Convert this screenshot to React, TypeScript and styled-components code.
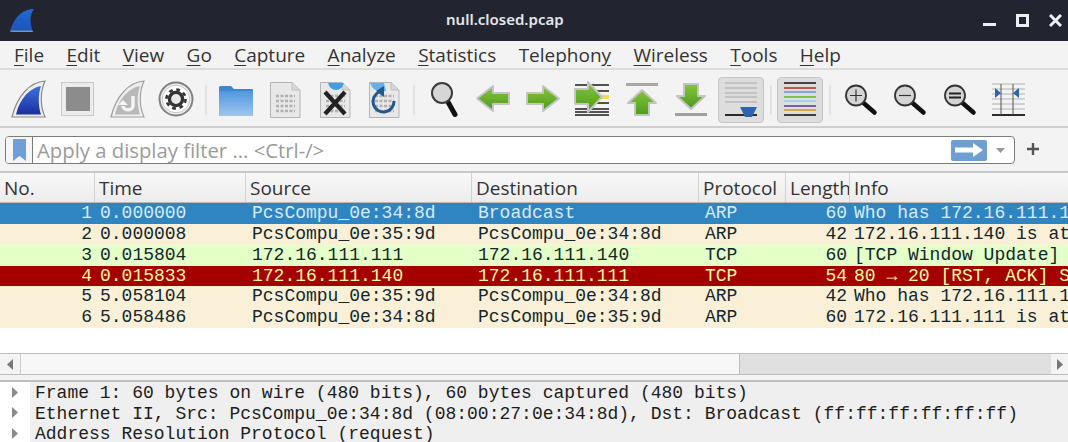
import React from "react";
import styled, { createGlobalStyle } from "styled-components";

const GlobalStyle = createGlobalStyle`
  html, body {
    margin: 0;
    padding: 0;
    background: #f3f3f3;
    overflow: hidden;
  }
`;

const Window = styled.div`
  width: 1068px;
  height: 442px;
  overflow: hidden;
  display: flex;
  flex-direction: column;
  font-family: "Open Sans", "Noto Sans", sans-serif;
  color: #2b2b2b;
`;

const TitleBar = styled.header`
  height: 41px;
  flex: none;
  background: #22252f;
  display: grid;
  grid-template-columns: 446px auto 1fr;
  align-items: center;
`;

const Logo = styled.div`
  padding-left: 10px;
  display: flex;
  svg {
    display: block;
  }
`;

const WindowTitle = styled.div`
  font-family: "Noto Sans", sans-serif;
  font-size: 15px;
  font-weight: 600;
  color: #e4e6ea;
  padding-bottom: 3px;
`;

const WindowButtons = styled.div`
  justify-self: end;
  display: flex;
  gap: 20px;
  padding-right: 6px;
  align-items: center;
`;

const MenuBar = styled.nav`
  height: 27px;
  flex: none;
  background: #f3f3f3;
  border-bottom: 2px solid #dcdcdc;
  display: flex;
  gap: 22.4px;
  padding-left: 14px;
  align-items: center;
  font-size: 19px;
  color: #333;
  box-sizing: content-box;
`;

const Mnemonic = styled.span`
  text-decoration: underline;
  text-underline-offset: 3px;
  text-decoration-thickness: 1px;
`;

const ToolBar = styled.div`
  height: 52px;
  padding: 4px 0 0 3px;
  flex: none;
  background: #f3f3f3;
  border-bottom: 2px solid #cfcfcf;
  display: flex;
  align-items: center;
`;

const ToolSlot = styled.div`
  width: 49.5px;
  height: 46px;
  flex: none;
  display: flex;
  align-items: center;
  justify-content: center;
`;

const ToolSvg = styled.svg`
  display: block;
  margin-bottom: 2px;
`;

const ToggleFace = styled.div`
  width: 46px;
  height: 46px;
  box-sizing: border-box;
  background: #dddddd;
  border: 1px solid #c6c6c6;
  border-radius: 4px;
  display: flex;
  align-items: center;
  justify-content: center;
`;

const ToolSeparator = styled.div`
  width: 10px;
  flex: none;
  display: flex;
  justify-content: center;
  &::before {
    content: "";
    width: 2px;
    height: 30px;
    background: #e2e2e2;
  }
`;

const FilterBar = styled.div`
  height: 42px;
  padding-top: 1px;
  flex: none;
  background: #f3f3f3;
  border-bottom: 2px solid #c8c8c8;
  display: flex;
  align-items: center;
  padding-left: 5px;
  gap: 10px;
`;

const FilterInput = styled.div`
  width: 1010px;
  height: 28px;
  box-sizing: border-box;
  background: #fff;
  border: 1px solid #7c7c7c;
  border-radius: 4px;
  display: flex;
  align-items: center;
`;

const BookmarkButton = styled.div`
  width: 27px;
  height: 100%;
  flex: none;
  box-sizing: border-box;
  border-right: 1px solid #7c7c7c;
  display: flex;
  align-items: center;
  justify-content: center;
  background: #f5f5f5;
  border-radius: 3px 0 0 3px;
`;

const FilterPlaceholder = styled.div`
  flex: 1;
  padding-left: 4px;
  font-size: 20.3px;
  line-height: 28px;
  color: #9b9b9b;
  white-space: nowrap;
`;

const ApplyButton = styled.div`
  width: 36px;
  height: 21px;
  flex: none;
  background: #6f9fd0;
  border-radius: 2px;
  display: flex;
  align-items: center;
  justify-content: center;
`;

const DropButton = styled.div`
  width: 27px;
  flex: none;
  display: flex;
  justify-content: center;
`;

const PlusButton = styled.div`
  width: 16px;
  display: flex;
  justify-content: center;
  margin-bottom: 3px;
`;

const columns = "95px 151px 226px 227px 87px 64px 1fr";

const PacketHeader = styled.div`
  height: 29px;
  flex: none;
  display: grid;
  grid-template-columns: ${columns};
  background: linear-gradient(#f8f8f8, #ececec);
  border-bottom: 1px solid #b8b8b8;
  font-size: 19px;
  color: #333;
`;

const HeaderCell = styled.div`
  padding-left: 4px;
  line-height: 31px;
  white-space: nowrap;
  overflow: hidden;
  border-right: 1px solid #d2d2d2;
  &:last-child {
    border-right: 0;
  }
`;

const PacketList = styled.div`
  height: 150px;
  flex: none;
  background: #fff;
  font-family: "Liberation Mono", monospace;
  font-size: 18px;
`;

const rowColors = {
  selected: { bg: "#2f85c1", fg: "#d6ecff" },
  arp: { bg: "#faf0d7", fg: "#12272e" },
  tcp: { bg: "#e4ffc7", fg: "#12272e" },
  bad: { bg: "#a40000", fg: "#fffc9c" },
};

const PacketRow = styled.div<{ $kind: keyof typeof rowColors }>`
  height: 20.85px;
  display: grid;
  grid-template-columns: ${columns};
  line-height: 20.85px;
  background: ${(p) => rowColors[p.$kind].bg};
  color: ${(p) => rowColors[p.$kind].fg};
`;

const Cell = styled.div<{ $right?: boolean; $pad?: number }>`
  padding: 0 ${(p) => (p.$right ? "3px" : "0")} 0 ${(p) => (p.$right ? 0 : (p.$pad ?? 6))}px;
  text-align: ${(p) => (p.$right ? "right" : "left")};
  white-space: pre;
  overflow: hidden;
`;

const ScrollBar = styled.div`
  height: 22px;
  flex: none;
  box-sizing: border-box;
  display: flex;
  border-top: 1px solid #bdbdbd;
  border-bottom: 1px solid #bdbdbd;
  background: #e0e0e0;
`;

const ScrollEnd = styled.div<{ $width: number }>`
  width: ${(p) => p.$width}px;
  flex: none;
  background: #f4f4f4;
  display: flex;
  align-items: center;
  justify-content: center;
`;

const ScrollThumb = styled.div`
  width: 720px;
  flex: none;
  box-sizing: border-box;
  background: #f7f7f7;
  border-left: 1px solid #cdcdcd;
  border-right: 1px solid #bdbdbd;
`;

const ScrollTrack = styled.div`
  flex: 1;
`;

const PaneSplitter = styled.div`
  height: 7px;
  flex: none;
  background: #f3f3f3;
  border-bottom: 2px solid #bdbdbd;
  box-sizing: border-box;
`;

const DetailPane = styled.div`
  flex: 1;
  background: #fff;
  font-family: "Liberation Mono", monospace;
  font-size: 18px;
  line-height: 20.6px;
  color: #1d1d1d;
`;

const DetailRow = styled.div`
  display: flex;
  height: 20.6px;
`;

const DetailArrow = styled.div`
  width: 29px;
  padding-right: 1px;
  flex: none;
  display: flex;
  align-items: center;
  justify-content: center;
  background: #fff;
`;

const DetailText = styled.div`
  flex: 1;
  background: #efefef;
  padding: 1px 0 0 5px;
  white-space: pre;
  overflow: hidden;
`;

const FinPath = "M37 5C22 6 9 20 4 41L37 41C32 30 32 16 37 5Z";

function Gradients() {
  return (
    <svg width="0" height="0" style={{ position: "absolute" }}>
      <defs>
        <linearGradient id="fin" x1="0" y1="0" x2="0" y2="1">
          <stop offset="0" stopColor="#3a72e0" />
          <stop offset="1" stopColor="#1b2f9c" />
        </linearGradient>
        <linearGradient id="finLogo" x1="0" y1="0" x2="0" y2="1">
          <stop offset="0" stopColor="#1f6ad0" />
          <stop offset="0.9" stopColor="#1d54b8" />
          <stop offset="1" stopColor="#8fa8c8" />
        </linearGradient>
        <linearGradient id="folder" x1="0" y1="0" x2="0" y2="1">
          <stop offset="0" stopColor="#4f97de" />
          <stop offset="1" stopColor="#a0c6ee" />
        </linearGradient>
        <linearGradient id="green" x1="0" y1="0" x2="0" y2="1">
          <stop offset="0" stopColor="#86c63a" />
          <stop offset="1" stopColor="#4c9a1e" />
        </linearGradient>
      </defs>
    </svg>
  );
}

function ToolIcon({ children }: { children: React.ReactNode }) {
  return (
    <ToolSvg width="40" height="46" viewBox="0 0 40 46">
      {children}
    </ToolSvg>
  );
}

const DocSheet = ({ x = 5 }: { x?: number }) => (
  <>
    <path
      d={`M${x + 0.5} 6.5H${x + 22}L${x + 30} 14V41.5H${x + 0.5}Z`}
      fill="#e8e8e8"
      stroke="#b5b5b5"
    />
    <path d={`M${x + 22} 6.5V14H${x + 30}`} fill="#d6d6d6" stroke="#c0c0c0" />
    {[20, 25, 30, 35].map((y) => (
      <path
        key={y}
        d={`M${x + 6} ${y}H${x + 25}`}
        stroke="#b0b0b0"
        strokeWidth="2.5"
        strokeDasharray="3 1.5"
      />
    ))}
  </>
);

const Lens = () => (
  <>
    <path d="M23 26.5L34.5 36.5" stroke="#111" strokeWidth="4.5" strokeLinecap="round" />
    <circle cx="16" cy="19.5" r="10" fill="#d4d4d4" stroke="#333" strokeWidth="1.8" />
  </>
);

const ArrowLine = { fill: "url(#green)", stroke: "#c4c4c4", strokeWidth: 2, strokeLinejoin: "round" as const };

const toolIcons: Record<string, React.ReactNode> = {
  shark: (
    <>
      <path d={FinPath} fill="#eee" stroke="#8a8a8a" strokeWidth="1.2" />
      <path d="M33 10C22 12 12 22 8 38.5H33C30 30 30 18 33 10Z" fill="url(#fin)" />
    </>
  ),
  stop: (
    <>
      <rect x="4.5" y="6.5" width="32" height="33" fill="#ececec" stroke="#c9c9c9" />
      <rect x="9" y="11" width="24" height="24" fill="#8c8c8c" />
    </>
  ),
  restart: (
    <>
      <path d={FinPath} fill="#eee" stroke="#a0a0a0" strokeWidth="1.2" />
      <path d="M33 10C22 12 12 22 8 38.5H33C30 30 30 18 33 10Z" fill="#b8b8b8" />
      <path d="M26 20V30C26 35 16 35 16 30" fill="none" stroke="#f4f4f4" strokeWidth="3.5" />
      <path d="M11 29H21L16 24Z" fill="#f4f4f4" />
    </>
  ),
  gear: (
    <>
      <circle cx="20" cy="23" r="16.5" fill="#f2f2f2" stroke="#808080" strokeWidth="2" />
      <circle cx="20" cy="23" r="13.8" fill="#fff" stroke="#c4c4c4" strokeWidth="1" />
      <circle cx="20" cy="23" r="9.5" fill="none" stroke="#333" strokeWidth="2.6" strokeDasharray="3.8 3.66" />
      <circle cx="20" cy="23" r="6.6" fill="#e8e8e8" stroke="#333" strokeWidth="3.4" />
    </>
  ),
  folder: (
    <>
      <path d="M3 39V11.5Q3 10 4.5 10H15L18 13H36Q37 13 37 14V39Q37 40 36 40H4Q3 40 3 39Z" fill="#3f86d0" />
      <rect x="3" y="15" width="34" height="25" rx="1" fill="url(#folder)" />
    </>
  ),
  doc: <DocSheet />,
  close: (
    <>
      <DocSheet />
      <path d="M13 7H29Q27 14 21 14Q15 14 13 7Z" fill="#3ea0e0" />
      <path d="M10 16L30 38M30 16L10 38" stroke="#222" strokeWidth="4.2" />
    </>
  ),
  reload: (
    <>
      <DocSheet />
      <path d="M6 7H20L22 15Q10 18 6 7Z" fill="#66b0e8" />
      <path d="M15 16A10.5 10.5 0 1 0 30 25" fill="none" stroke="#23578f" strokeWidth="3" />
      <path d="M20 10L20 21L12 15Z" fill="#23578f" />
    </>
  ),
  search: (
    <>
      <path d="M24 26L31 38.5" stroke="#111" strokeWidth="5" strokeLinecap="round" />
      <circle cx="18" cy="17" r="10" fill="#d6d6d6" stroke="#3a3a3a" strokeWidth="2" />
    </>
  ),
  back: <path d="M4 22.5L20 10V17H36V28H20V35Z" {...ArrowLine} />,
  forward: <path d="M36 22.5L20 10V17H4V28H20V35Z" {...ArrowLine} />,
  jump: (
    <>
      {[9, 15, 21, 27, 33, 36, 39].map((y) => (
        <path key={y} d={`M3 ${y}H37`} stroke="#1c1c1c" strokeWidth="1.3" />
      ))}
      <rect x="29" y="19" width="8" height="4" fill="#f0dc50" />
      <path d="M30 21L16 6V13H3V28H16V36Z" {...ArrowLine} />
    </>
  ),
  top: (
    <>
      <rect x="4" y="7" width="32" height="3" fill="#a8a8a8" />
      <path d="M20 14L6 27H13V39H27V27H34Z" {...ArrowLine} />
    </>
  ),
  bottom: (
    <>
      <rect x="4" y="37" width="32" height="3" fill="#a0a0a0" />
      <path d="M20 33L6 20H13V8H27V20H34Z" {...ArrowLine} />
    </>
  ),
  zoomIn: (
    <>
      <Lens />
      <path d="M10 19.5H22M16 13.5V25.5" stroke="#333" strokeWidth="1.2" />
    </>
  ),
  zoomOut: (
    <>
      <Lens />
      <path d="M10 19.5H22" stroke="#333" strokeWidth="1.2" />
    </>
  ),
  zoomNormal: (
    <>
      <Lens />
      <path d="M10 17.5H22M10 21.5H22" stroke="#222" strokeWidth="2" />
    </>
  ),
  resize: (
    <>
      {[8, 13, 18, 23, 28, 33].map((y) => (
        <path key={y} d={`M4 ${y}H37`} stroke="#c8c8c8" strokeWidth="1.3" />
      ))}
      <path d="M4 39H37" stroke="#2a2a2a" strokeWidth="2" />
      <path d="M13 8V39M25 8V39" stroke="#555" strokeWidth="1" />
      <path d="M7 12L13 17L7 22ZM31 12L25 17L31 22Z" fill="#2d63b0" />
    </>
  ),
};

const AutoScrollIcon = () => (
  <svg width="34" height="36" viewBox="0 0 34 36">
    {[1, 6, 11, 15, 20].map((y) => (
      <path key={y} d={`M1 ${y}H33`} stroke="#b4b4b4" strokeWidth="1.3" />
    ))}
    <path d="M1 33H33" stroke="#2a2a2a" strokeWidth="2" />
    <path d="M16 25H33L28 35H21Z" fill="#2d63b0" />
  </svg>
);

const ColorizeIcon = () => (
  <svg width="34" height="36" viewBox="0 0 34 36">
    {[
      ["#2a2a2a", 1],
      ["#c23b3b", 6],
      ["#7b9bd4", 10],
      ["#6cc22a", 15],
      ["#9ad0e8", 19],
      ["#6a4a96", 24],
      ["#d0a020", 28],
      ["#222", 33],
    ].map(([color, y]) => (
      <path key={y} d={`M1 ${y}H33`} stroke={color as string} strokeWidth="1.7" />
    ))}
  </svg>
);

type Packet = {
  no: string;
  time: string;
  src: string;
  dst: string;
  proto: string;
  len: string;
  info: string;
  kind: keyof typeof rowColors;
};

const packets: Packet[] = [
  { no: "1", time: "0.000000", src: "PcsCompu_0e:34:8d", dst: "Broadcast", proto: "ARP", len: "60", info: "Who has 172.16.111.111? Tell 172.16.111.140", kind: "selected" },
  { no: "2", time: "0.000008", src: "PcsCompu_0e:35:9d", dst: "PcsCompu_0e:34:8d", proto: "ARP", len: "42", info: "172.16.111.140 is at 08:00:27:0e:35:9d", kind: "arp" },
  { no: "3", time: "0.015804", src: "172.16.111.111", dst: "172.16.111.140", proto: "TCP", len: "60", info: "[TCP Window Update] 20 → 80 [ACK]", kind: "tcp" },
  { no: "4", time: "0.015833", src: "172.16.111.140", dst: "172.16.111.111", proto: "TCP", len: "54", info: "80 → 20 [RST, ACK] Seq=1 Ack=1 Win=0 Len=0", kind: "bad" },
  { no: "5", time: "5.058104", src: "PcsCompu_0e:35:9d", dst: "PcsCompu_0e:34:8d", proto: "ARP", len: "42", info: "Who has 172.16.111.111? Tell 172.16.111.140", kind: "arp" },
  { no: "6", time: "5.058486", src: "PcsCompu_0e:34:8d", dst: "PcsCompu_0e:35:9d", proto: "ARP", len: "60", info: "172.16.111.111 is at 08:00:27:0e:34:8d", kind: "arp" },
];

const details = [
  "Frame 1: 60 bytes on wire (480 bits), 60 bytes captured (480 bits)",
  "Ethernet II, Src: PcsCompu_0e:34:8d (08:00:27:0e:34:8d), Dst: Broadcast (ff:ff:ff:ff:ff:ff)",
  "Address Resolution Protocol (request)",
];

const menus: [string, string, string][] = [
  ["", "F", "ile"],
  ["", "E", "dit"],
  ["", "V", "iew"],
  ["", "G", "o"],
  ["", "C", "apture"],
  ["", "A", "nalyze"],
  ["", "S", "tatistics"],
  ["Telephon", "y", ""],
  ["", "W", "ireless"],
  ["", "T", "ools"],
  ["", "H", "elp"],
];

const Tri = ({ dir, color = "#777" }: { dir: "left" | "right"; color?: string }) => (
  <svg width="6" height="11" viewBox="0 0 6 11">
    <path d={dir === "left" ? "M6 0V11L0 5.5Z" : "M0 0V11L6 5.5Z"} fill={color} />
  </svg>
);

export default function App() {
  const slot = (name: string) => (
    <ToolSlot key={name}>
      <ToolIcon>{toolIcons[name]}</ToolIcon>
    </ToolSlot>
  );

  return (
    <>
      <GlobalStyle />
      <Gradients />
      <Window>
        <TitleBar>
          <Logo>
            <svg width="24" height="24" viewBox="10 8 24 24">
              <path d="M34 8C24 8 15 14 10 30Q10 31 12 31H33C30 22 29 15 34 8Z" fill="url(#finLogo)" />
            </svg>
          </Logo>
          <WindowTitle>null.closed.pcap</WindowTitle>
          <WindowButtons>
            <svg width="13" height="13" viewBox="0 0 13 13">
              <rect x="0" y="9" width="13" height="3" fill="#eee" />
            </svg>
            <svg width="13" height="13" viewBox="0 0 13 13">
              <rect x="1.5" y="1.5" width="10" height="10" fill="none" stroke="#eee" strokeWidth="3" />
            </svg>
            <svg width="13" height="13" viewBox="0 0 13 13">
              <path d="M1 1L12 12M12 1L1 12" stroke="#eee" strokeWidth="3" />
            </svg>
          </WindowButtons>
        </TitleBar>

        <MenuBar>
          {menus.map(([pre, key, post]) => (
            <span key={pre + key + post}>
              {pre}
              <Mnemonic>{key}</Mnemonic>
              {post}
            </span>
          ))}
        </MenuBar>

        <ToolBar>
          {["shark", "stop", "restart", "gear"].map(slot)}
          <ToolSeparator />
          {["folder", "doc", "close", "reload"].map(slot)}
          <ToolSeparator />
          {["search", "back", "forward", "jump", "top", "bottom"].map(slot)}
          <ToolSlot>
            <ToggleFace>
              <AutoScrollIcon />
            </ToggleFace>
          </ToolSlot>
          <ToolSeparator />
          <ToolSlot>
            <ToggleFace>
              <ColorizeIcon />
            </ToggleFace>
          </ToolSlot>
          <ToolSeparator />
          {["zoomIn", "zoomOut", "zoomNormal", "resize"].map(slot)}
        </ToolBar>

        <FilterBar>
          <FilterInput>
            <BookmarkButton>
              <svg width="13" height="22" viewBox="0 0 13 22">
                <path d="M0 0H13V22L6.5 17L0 22Z" fill="#6f9fd8" />
              </svg>
            </BookmarkButton>
            <FilterPlaceholder>Apply a display filter ... &lt;Ctrl-/&gt;</FilterPlaceholder>
            <ApplyButton>
              <svg width="28" height="14" viewBox="0 0 28 14">
                <path d="M0 4.5H18V0L28 7L18 14V9.5H0Z" fill="#fff" />
              </svg>
            </ApplyButton>
            <DropButton>
              <svg width="9" height="5" viewBox="0 0 9 5">
                <path d="M0 0H9L4.5 5Z" fill="#999" />
              </svg>
            </DropButton>
          </FilterInput>
          <PlusButton>
            <svg width="12" height="12" viewBox="0 0 12 12">
              <path d="M0 6H12M6 0V12" stroke="#555" strokeWidth="2.4" />
            </svg>
          </PlusButton>
        </FilterBar>

        <PacketHeader>
          {["No.", "Time", "Source", "Destination", "Protocol", "Length", "Info"].map((h) => (
            <HeaderCell key={h}>{h}</HeaderCell>
          ))}
        </PacketHeader>

        <PacketList>
          {packets.map((p) => (
            <PacketRow key={p.no} $kind={p.kind}>
              <Cell $right>{p.no}</Cell>
              <Cell $pad={5}>{p.time}</Cell>
              <Cell>{p.src}</Cell>
              <Cell>{p.dst}</Cell>
              <Cell>{p.proto}</Cell>
              <Cell $right>{p.len}</Cell>
              <Cell $pad={4}>{p.info}</Cell>
            </PacketRow>
          ))}
        </PacketList>

        <ScrollBar>
          <ScrollEnd $width={20}>
            <Tri dir="left" />
          </ScrollEnd>
          <ScrollThumb />
          <ScrollTrack />
          <ScrollEnd $width={17}>
            <Tri dir="right" />
          </ScrollEnd>
        </ScrollBar>

        <PaneSplitter />

        <DetailPane>
          {details.map((d) => (
            <DetailRow key={d}>
              <DetailArrow>
                <Tri dir="right" color="#8a8a8a" />
              </DetailArrow>
              <DetailText>{d}</DetailText>
            </DetailRow>
          ))}
        </DetailPane>
      </Window>
    </>
  );
}
